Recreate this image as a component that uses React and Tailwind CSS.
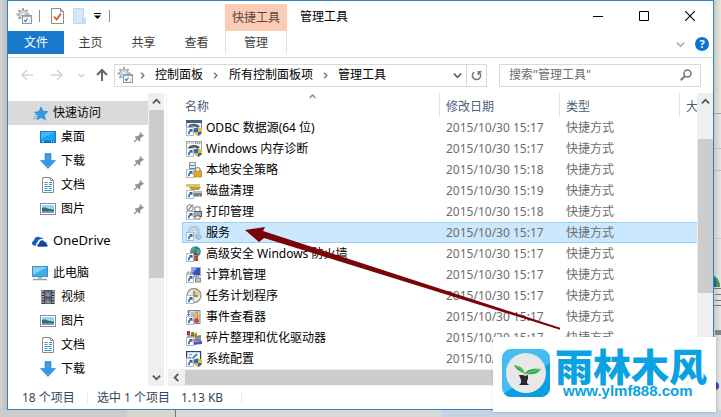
import React from "react";

/* ---------- small glyphs ---------- */

function Chevron({ dir = "down", className = "" }) {
  const paths = {
    down: "M1 3l4 4 4-4",
    up: "M1 7l4-4 4 4",
    left: "M7 1L3 5l4 4",
    right: "M3 1l4 4-4 4",
  };
  return (
    <svg viewBox="0 0 10 10" className={className} fill="none" stroke="currentColor" strokeWidth="2">
      <path d={paths[dir]} />
    </svg>
  );
}

function ToolsIcon() {
  return (
    <svg viewBox="0 0 16 16" className="size-4 shrink-0">
      <g stroke="#a3a8ab" strokeWidth="2">
        <path d="M7 0v13M.5 6.500h13M2.400 2l9.200 9M11.600 2l-9.200 9" />
      </g>
      <circle cx="7" cy="6.500" r="4.200" fill="#d5d9dc" stroke="#a3a8ab" />
      <circle cx="7" cy="6.500" r="1.800" fill="#fff" stroke="#b5b9bc" strokeWidth=".6" />
      <rect x="6.500" y="7.500" width="9" height="8" fill="#fff" stroke="#8b98a3" />
      <path d="M6.500 8.500h9" stroke="#9ab0c0" strokeWidth="1.400" />
      <path d="M8 12l1.400 1.500L11.500 10.500" fill="none" stroke="#2b7fc6" strokeWidth="1.200" />
      <path d="M12.500 12h2M12.500 13.800h2" stroke="#b9c4cc" strokeWidth=".8" />
    </svg>
  );
}

function CheckDoc() {
  return (
    <svg viewBox="0 0 13 16" className="h-4 w-[13px]">
      <path d="M.5.5h9l3 3v12H.5z" fill="#fff" stroke="#8b8b8b" />
      <path d="M9.500.5v3h3" fill="none" stroke="#8b8b8b" />
      <path d="M3 8.500l2.600 3L10 5.500" fill="none" stroke="#e0562b" strokeWidth="1.800" />
    </svg>
  );
}

function PaleFolder() {
  return (
    <svg viewBox="0 0 13 16" className="h-4 w-[13px]">
      <path d="M.5.5h10V10h2v5.500H.5z" fill="#d8e6f5" stroke="#c4d6ea" />
      <path d="M10 10v5" stroke="#b9cbdf" />
    </svg>
  );
}

function Arrow({ dir, className }) {
  const d = { left: "M13 7H2M7 2L2 7l5 5", right: "M1 7h11M7 2l5 5-5 5", up: "M7 13V2M2 7l5-5 5 5" };
  return (
    <svg viewBox="0 0 14 14" className={className} fill="none" stroke="currentColor" strokeWidth={dir === "up" ? 2 : 1.5}>
      <path d={d[dir]} />
    </svg>
  );
}

/* ---------- navigation icons ---------- */

const navIcons = {
  star: (
    <>
      <path d="M9 2l2.100 4.200 4.700.4-3.400 3.500 1 4.700-4.200-2.300L5 14.800l.8-4.600L2.700 7.300l4.400-.9z" fill="#2f9be3" stroke="#1b7fcb" strokeWidth=".6" />
      <path d="M2.500 9.500h3M1.800 11.500h3M1 13.500h3" stroke="#5fb4ee" strokeWidth=".9" />
    </>
  ),
  desktop: (
    <>
      <rect x=".5" y="2.500" width="15" height="11" fill="#1aa0f2" stroke="#1480cc" />
      <path d="M1 3h14L1 10z" fill="#45b6f8" />
      <path d="M1 12.500h14" stroke="#0c66ad" strokeWidth="1.400" />
      <path d="M2 12.500h2M11 12.500h1M13 12.500h1" stroke="#bfe4ff" />
    </>
  ),
  download: <path d="M5 .5h6v7h4.500L8 15.500.5 7.500H5z" fill="#3f97e0" stroke="#2a7dca" strokeWidth=".6" />,
  doc: (
    <>
      <path d="M2.500.5h8l3 3v12h-11z" fill="#fff" stroke="#8d8d8d" />
      <path d="M10.500.5v3h3" fill="none" stroke="#8d8d8d" />
      <path d="M4.500 5.500h3M9 5.500h3M4.500 7.500h3M9 7.500h3M4.500 9.500h7M4.500 11.500h3M9 11.500h3M4.500 13.500h7" stroke="#3f95c8" />
    </>
  ),
  picture: (
    <>
      <rect x=".5" y="2.500" width="15" height="11" fill="#fff" stroke="#8d8d8d" />
      <rect x="2" y="4" width="12" height="8" fill="#9fd2ef" />
      <path d="M2 7c4-1.500 5 1.500 12 1.500V12H2z" fill="#376a80" />
      <path d="M2 10.500c4-1 8 .5 12-.5v2H2z" fill="#6ba8c8" />
    </>
  ),
  onedrive: (
    <>
      <path d="M1.500 12.500C-.8 11-.2 8 2.200 7.500 2.200 4.300 6 2.600 8.300 4.800c1.200-.5 2.500 0 3.100 1C7 5.500 5.600 8 5.500 9.500 4 10 4 11.500 4.300 12.500z" fill="#1a5ab8" />
      <path d="M6.500 14c-2-.4-2-3.400.4-3.600 0-3.600 4.600-4.600 5.800-1.600 2-.2 2.500 1.600 2.100 2.400 1.600.4 1.500 2.600-.2 2.800z" fill="#1345a0" stroke="#fff" strokeWidth=".6" />
    </>
  ),
  pc: (
    <>
      <rect x=".5" y="1.500" width="15" height="10" fill="#3bb2ee" stroke="#4a89ad" />
      <path d="M1 2h14L1 10z" fill="#7fd0f7" />
      <path d="M6 12.500h4M1 14.500h14" stroke="#8fa2ae" strokeWidth="1.300" />
    </>
  ),
  video: (
    <>
      <rect x="1.500" y="1" width="13" height="14" fill="#2f2f2f" />
      <rect x="4.500" y="1.500" width="7" height="6" fill="#4b76b8" />
      <rect x="4.500" y="8.500" width="7" height="6" fill="#4869b8" />
      <path d="M4.500 7.500l3-4 4 4zM4.500 14.500l3-4 4 4z" fill="#b88a38" />
      <path d="M3 1.500v14M13 1.500v14" stroke="#e8e8e8" strokeWidth="1.400" strokeDasharray="1.500 1.200" />
    </>
  ),
};

function NavIcon({ name }) {
  return <svg viewBox="0 0 16 16" className="size-4 shrink-0">{navIcons[name]}</svg>;
}

function Pin() {
  return (
    <svg viewBox="0 0 12 12" className="ml-auto mr-[3px] size-3">
      <path d="M7 1l4 4-1 .6-.8-.2-2 2 .2 2.300-.9.8L1.800 6l.8-.9 2.300.2 2-2-.3-1.300z" fill="#8894a0" />
      <path d="M4.500 7.500L1 11" stroke="#8894a0" strokeWidth="1.200" />
    </svg>
  );
}

/* ---------- file icons ---------- */

const shield = (
  <>
    <path d="M12 7.500l4 1v3c0 2-2 3.500-4 4.500-2-1-4-2.500-4-4.500v-3z" fill="#e6bb45" />
    <path d="M12 7.500l-4 1V12h4zM12 12h4c-.3 2-2 3.200-4 4z" fill="#2f6cab" />
  </>
);

const fileArt = {
  odbc: (
    <>
      <rect x=".5" y=".5" width="15" height="12" fill="#eef3f8" stroke="#7890a8" />
      <path d="M0 1.500h16" stroke="#3f5f8c" strokeWidth="3" />
      <path d="M3 7c2-2.500 7-2.500 10 0" fill="none" stroke="#5a636b" strokeWidth="2.600" />
      {shield}
    </>
  ),
  memory: (
    <>
      <rect x=".5" y=".5" width="15" height="12" fill="#f8fafb" stroke="#9aa7b1" />
      <path d="M1 2h14" stroke="#d3dde5" strokeWidth="2" />
      <path d="M9 2h5" stroke="#51657a" strokeDasharray="1 1" />
      <path d="M3 7.500c2-3 7-3 10-.5" fill="none" stroke="#4a555e" strokeWidth="2.600" />
      {shield}
    </>
  ),
  policy: (
    <>
      <rect x="3.500" y=".5" width="6" height="11" fill="#e5ebf2" stroke="#8796ab" />
      <path d="M4 3.500h5M4 6.500h5" stroke="#5f7fa6" />
      <path d="M9.500 9V7.500c0-2.500 4.500-2.500 4.500 0V9" fill="none" stroke="#8d8d8d" strokeWidth="1.300" />
      <rect x="8" y="9" width="7.500" height="6" fill="#e9b52c" stroke="#a87a12" strokeWidth=".7" />
      <path d="M8 11h7M8 13h7" stroke="#c6921a" strokeWidth=".7" />
    </>
  ),
  disk: (
    <>
      <path d="M0 1h14v3H0z" fill="#dcc36d" />
      <path d="M3 4h12l-2 3H5z" fill="#b99c49" />
      <rect x="5" y="8.500" width="11" height="5" fill="#70767c" />
      <path d="M5 9.500h11" stroke="#b9bec2" strokeWidth="1.500" />
      <path d="M12 12.500h2" stroke="#44db59" />
    </>
  ),
  print: (
    <>
      <circle cx="4" cy="4" r="3.300" fill="#e5e8ea" stroke="#84898d" />
      <path d="M1.500 6.500l5-5M4 4l3-3.500" stroke="#6e7377" />
      <rect x="9" y="3" width="5" height="5" fill="#fff" stroke="#7a7f83" />
      <rect x="6.500" y="7.500" width="9" height="5" fill="#a3a8ac" stroke="#565b5f" />
      <path d="M9 12h5v3H9z" fill="#fff" stroke="#565b5f" strokeWidth=".8" />
    </>
  ),
  service: (
    <>
      <circle cx="8" cy="6.500" r="5.500" fill="none" stroke="#a9c4d6" strokeWidth="2" strokeDasharray="1.500 1.300" />
      <circle cx="8" cy="6.500" r="4.200" fill="#cfe4f2" stroke="#9ab8cc" />
      <circle cx="8" cy="6.500" r="1.800" fill="#e2f1fb" stroke="#9ab8cc" strokeWidth=".7" />
      <circle cx="12.500" cy="12" r="2.500" fill="#b5cad8" stroke="#7f9eb3" strokeDasharray="1 .6" />
    </>
  ),
  firewall: (
    <>
      <circle cx="9.500" cy="5.500" r="5.300" fill="#2977c9" />
      <path d="M6 2c3-2 5 0 3 2S5 7 5 4zM11 3c3 0 4 3 2 5s-3-3-2-5z" fill="#54b152" />
      <path d="M2 7h8l2 2v6H3z" fill="#9b3a2c" />
      <path d="M3 9.500h9M3 12h9M6 7v8M9 9v6" stroke="#d99c82" strokeWidth=".6" />
    </>
  ),
  computer: (
    <>
      <rect x="5.500" y=".5" width="9" height="8" fill="#3b50c6" stroke="#a3adba" />
      <path d="M6 1h5L6 7z" fill="#8fa0ef" />
      <path d="M1 5h4v4H1z" fill="#cbd1d7" stroke="#8a939b" strokeWidth=".7" />
      <path d="M8 9.500h5" stroke="#9fa8b2" strokeWidth="2" />
      <rect x="9.500" y="11" width="5" height="4" fill="#c0c6cb" stroke="#6f777e" strokeWidth=".8" />
    </>
  ),
  clock: (
    <>
      <circle cx="8" cy="7.500" r="7" fill="#f2ead5" stroke="#8f9395" strokeWidth="1.300" />
      <path d="M8 7.500V1.500a6 6 0 0 1 6 6z" fill="#e5cf8e" />
      <path d="M8 3v5h4" fill="none" stroke="#6b6f73" strokeWidth="1.300" />
    </>
  ),
  event: (
    <>
      <rect x="2.500" y="1.500" width="11.500" height="13" fill="#dfe4ea" stroke="#7d8690" />
      <path d="M1 3h3M1 5.500h3M1 8h3" stroke="#6d767f" />
      <path d="M5 4h3M5 6h3M11.500 2v12" stroke="#8595a8" />
      <path d="M10 2.500l3 5.500H7z" fill="#f0c234" stroke="#b88a12" strokeWidth=".6" />
      <circle cx="10.500" cy="11.500" r="2.500" fill="#cf4049" />
    </>
  ),
  defrag: (
    <>
      <path d="M1 1h3v4H1z" fill="#d62727" />
      <path d="M5 2h3v4H5z" fill="#39a84b" />
      <path d="M8 4l3-2v5H8z" fill="#e37828" />
      <path d="M9 6l6-1v3l-6 1z" fill="#3eab55" />
      <path d="M7 9l8-.5V11l-8 .5z" fill="#c748b0" />
      <path d="M7 12l9-1v3l-9 1z" fill="#4157c5" />
      <path d="M1 6h7" stroke="#7b2f2f" />
    </>
  ),
  config: (
    <>
      <rect x=".6" y=".6" width="14" height="12" fill="#edf4fb" stroke="#27476f" strokeWidth="1.200" />
      <path d="M3 6l2.500 2.500L11 3" fill="none" stroke="#2a68c0" strokeWidth="1.500" />
      <path d="M3 3.500h3" stroke="#7693b2" />
      {shield}
    </>
  ),
};

function FileIcon({ name }) {
  return (
    <svg viewBox="0 0 16 16" className="size-4 shrink-0">
      {fileArt[name]}
      <rect x=".5" y="7.500" width="7" height="8" fill="#fff" stroke="#b4bac0" />
      <path d="M3 9h3.500v3.500z" fill="#2b68a8" />
      <path d="M5.500 10.200C3.600 10.800 2.600 12.200 2.800 14.300" fill="none" stroke="#2b68a8" strokeWidth="1.500" />
    </svg>
  );
}

/* ---------- data ---------- */

const files = [
  ["odbc", "ODBC 数据源(64 位)", "15:17"],
  ["memory", "Windows 内存诊断", "15:17"],
  ["policy", "本地安全策略", "15:18"],
  ["disk", "磁盘清理", "15:19"],
  ["print", "打印管理", "15:18"],
  ["service", "服务", "15:17"],
  ["firewall", "高级安全 Windows 防火墙", "15:17"],
  ["computer", "计算机管理", "15:17"],
  ["clock", "任务计划程序", "15:17"],
  ["event", "事件查看器", "15:17"],
  ["defrag", "碎片整理和优化驱动器", "15:17"],
  ["config", "系统配置", "15:17"],
];

const quickItems = [
  ["desktop", "桌面"],
  ["download", "下载"],
  ["doc", "文档"],
  ["picture", "图片"],
];

const pcItems = [
  ["video", "视频"],
  ["picture", "图片"],
  ["doc", "文档"],
  ["download", "下载"],
];

/* ---------- sections ---------- */

function TitleBar() {
  return (
    <header className="flex h-[30px]">
      <div className="flex w-[217px] items-center pl-2">
        <ToolsIcon />
        <span className="ml-[7px] h-3 w-px bg-[#8a8a8a]" />
        <button aria-label="属性" className="ml-[11px]"><CheckDoc /></button>
        <button aria-label="新建文件夹" className="ml-[9px]"><PaleFolder /></button>
        <button aria-label="自定义快速访问工具栏" className="ml-2">
          <svg viewBox="0 0 7 6" className="h-[6px] w-[7px]"><path d="M0 .5h7" stroke="#000" /><path d="M0 2.500h7L3.500 6z" /></svg>
        </button>
        <span className="ml-2 h-3 w-px bg-[#8a8a8a]" />
      </div>
      <div className="mt-[3px] flex w-[62px] items-center justify-center bg-[#fbcbb4] text-[#5d463c]">快捷工具</div>
      <h1 className="ml-[13px] leading-8">管理工具</h1>
      <div className="ml-auto flex">
        <button aria-label="最小化" className="flex w-[46px] items-center justify-center">
          <svg viewBox="0 0 10 10" className="size-[10px]"><path d="M0 5.500h10" stroke="#000" /></svg>
        </button>
        <button aria-label="最大化" className="flex w-[46px] items-center justify-center">
          <svg viewBox="0 0 10 10" className="size-[10px]"><path d="M.5.5h9v9h-9z" fill="none" stroke="#000" /></svg>
        </button>
        <button aria-label="关闭" className="flex w-[46px] items-center justify-center">
          <svg viewBox="0 0 10 10" className="size-[10px]"><path d="M0 0l10 10M10 0L0 10" stroke="#000" strokeWidth="1.100" /></svg>
        </button>
      </div>
    </header>
  );
}

function Ribbon() {
  return (
    <div className="flex h-[27px] border-b border-[#dadbdc] text-[#3c3c3c]">
      <button className="h-[23px] w-14 bg-[#1979ca] text-white">文件</button>
      <button className="h-[23px] w-[53px]">主页</button>
      <button className="h-[23px] w-[53px]">共享</button>
      <button className="h-[23px] w-[53px]">查看</button>
      <button className="ml-[2px] h-[23px] w-[62px] border-x border-[#e3e3e3]">管理</button>
      <button aria-label="展开功能区" className="ml-auto flex items-center text-[#b0b0b0]">
        <Chevron className="size-[9px]" />
      </button>
      <button aria-label="帮助" className="ml-[10px] mr-1 mt-[6px] flex size-[14px] items-center justify-center rounded-full bg-[#0a73cf] text-[11px] font-bold text-white">?</button>
    </div>
  );
}

function AddressBar() {
  return (
    <div className="flex h-[35px] items-center pb-px">
      <div className="flex w-[106px] items-center pl-3">
        <button aria-label="后退"><Arrow dir="left" className="size-[14px] text-[#d2d2d2]" /></button>
        <button aria-label="前进" className="ml-4"><Arrow dir="right" className="size-[14px] text-[#d2d2d2]" /></button>
        <button aria-label="最近" className="ml-[14px]"><Chevron className="size-[7px] text-[#d2d2d2]" /></button>
        <button aria-label="上移" className="ml-[10px]"><Arrow dir="up" className="size-[14px] text-[#666]" /></button>
      </div>
      <div className="flex h-[23px] min-w-0 flex-1 items-center border border-[#d9d9d9] pl-[2px]">
        <ToolsIcon />
        <Chevron dir="right" className="ml-[6px] size-[7px] text-[#777]" />
        <button className="ml-[9px]">控制面板</button>
        <Chevron dir="right" className="ml-[9px] size-[7px] text-[#777]" />
        <button className="ml-[10px]">所有控制面板项</button>
        <Chevron dir="right" className="ml-[9px] size-[7px] text-[#777]" />
        <button className="ml-[9px]">管理工具</button>
        <button aria-label="历史记录" className="ml-auto mr-1"><Chevron className="size-[9px] text-[#666]" /></button>
        <button aria-label="刷新" className="flex h-full w-5 items-center justify-center border-l border-[#d9d9d9]">
          <svg viewBox="0 0 12 12" className="size-[11px]" fill="none" stroke="#777" strokeWidth="1.600">
            <path d="M8.500 2.200a4.500 4.500 0 1 1-5 0M8 5.500V1.800h3.500" />
          </svg>
        </button>
      </div>
      <label className="ml-3 mr-3 flex h-[23px] w-[202px] items-center border border-[#d9d9d9] pl-[9px] pr-2">
        <input type="text" aria-label="搜索" placeholder={'搜索"管理工具"'} className="min-w-0 flex-1 bg-transparent outline-none placeholder:text-[#6d6d6d]" />
        <svg viewBox="0 0 12 12" className="size-3" fill="none" stroke="#777">
          <circle cx="7.500" cy="4.500" r="3.500" strokeWidth="1.500" />
          <path d="M5 7L.8 11.200" strokeWidth="2" />
        </svg>
      </label>
    </div>
  );
}

function NavRow({ icon, label, nested, pin, active }) {
  return (
    <li>
      <a href="#" className={`flex h-6 items-center gap-[5px] ${nested ? "pl-8" : "pl-6"} ${active ? "bg-[#d9d9d9]" : ""}`}>
        <NavIcon name={icon} />
        {label}
        {pin && <Pin />}
      </a>
    </li>
  );
}

function NavPane() {
  return (
    <nav className="w-[140px] pt-2">
      <ul>
        <NavRow icon="star" label="快速访问" active />
        {quickItems.map(([i, l]) => <NavRow key={l} icon={i} label={l} nested pin />)}
      </ul>
      <ul className="mt-2 text-[13px]"><NavRow icon="onedrive" label="OneDrive" /></ul>
      <ul className="mt-2">
        <NavRow icon="pc" label="此电脑" />
        {pcItems.map(([i, l]) => <NavRow key={l} icon={i} label={l} nested />)}
      </ul>
    </nav>
  );
}

function VScroll({ thumb, down }) {
  return (
    <div className="flex w-4 shrink-0 flex-col items-center bg-[#efefef] text-[#555]">
      <div className="flex h-[17px] items-center"><Chevron dir="up" className="size-[9px]" /></div>
      <div className={`${thumb} w-[15px] bg-[#cdcdcd]`} />
      {down && <div className="mt-auto flex h-[17px] items-center"><Chevron className="size-[9px]" /></div>}
    </div>
  );
}

function FileTable() {
  return (
    <table className="w-full table-fixed border-separate border-spacing-0 whitespace-nowrap">
      <colgroup>
        <col />
        <col className="w-[120px]" />
        <col className="w-[120px]" />
        <col className="w-[17px]" />
      </colgroup>
      <thead>
        <tr className="h-6 text-left text-[#4c607a]">
          <th className="overflow-hidden border-r border-[#e5e5e5] p-0 pl-[3px] font-normal">
            <div className="flex h-6 flex-col">
              <Chevron dir="up" className="mx-auto -mb-[3px] size-[7px] shrink-0 text-[#888]" />
              <span className="leading-5">名称</span>
            </div>
          </th>
          <th className="border-r border-[#e5e5e5] p-0 pl-[6px] pt-1 font-normal leading-5">修改日期</th>
          <th className="border-r border-[#e5e5e5] p-0 pl-[6px] pt-1 font-normal leading-5">类型</th>
          <th className="overflow-hidden p-0 pl-[6px] pt-1 font-normal leading-5">大</th>
        </tr>
      </thead>
      <tbody>
        {files.map(([icon, name, time]) => {
          const sel = icon === "service";
          const edge = sel ? "border-y border-[#99d1f5] bg-[#cce8ff]" : "border-y border-transparent";
          return (
            <tr key={name} className="h-[21px] leading-[19px]">
              <td className={`${edge} p-0 ${sel ? "border-l pl-[3px]" : "pl-1"}`}>
                <span className="flex h-[19px] items-center gap-1"><FileIcon name={icon} />{name}</span>
              </td>
              <td className={`${edge} p-0 pl-[6px] text-[#6d6d6d]`}>2015/10/30 {time}</td>
              <td className={`${edge} p-0 pl-[6px] text-[#6d6d6d]`}>快捷方式</td>
              <td className={`${edge} p-0`} />
            </tr>
          );
        })}
      </tbody>
    </table>
  );
}

function StatusBar() {
  return (
    <footer className="flex h-[23px] items-center pl-[14px] text-[#33475c]">
      <span className="w-[65px]">18 个项目</span>
      <span className="h-3 w-px bg-[#ececec]" />
      <span className="ml-[9px] w-[84px]">选中 1 个项目</span>
      <span className="w-[60px]">1.13 KB</span>
      <span className="h-3 w-px bg-[#ececec]" />
    </footer>
  );
}

function Watermark() {
  return (
    <div className="absolute bottom-[5px] right-[5px] flex h-[75px] w-[223px] bg-white pl-[9px] pt-3 font-bold text-[#0aa2e3] shadow-sm">
      <svg viewBox="0 0 48 48" className="size-12 shrink-0">
        <rect width="48" height="48" rx="9" fill="#45bdf0" />
        <path d="M48 14v25a9 9 0 0 1-9 9H9a9 9 0 0 1-7-3.500z" fill="#0a9fe2" />
        <circle cx="24" cy="24" r="20" fill="#e8e8e8" />
        <path d="M23 25c-1-5-4-8-11-9 2 5 6 6 11 9z" fill="#35a94a" />
        <path d="M22 26c2-5 7-7 17-6-3 5-9 6-15 5z" fill="#35a94a" />
        <path d="M12 16c4 2 8 4 11 9M22 26c5-3 10-4 17-6" fill="none" stroke="#8bd68d" strokeWidth=".8" />
        <path d="M17 26h4l2 1 3-1 0 4-1 2v2l2 2H17l2-2v-3z" fill="#262a2d" />
      </svg>
      <div className="ml-[5px] flex-1">
        <div className="h-[34px] whitespace-nowrap text-[38px] font-black leading-[34px]">雨林木风</div>
        <div className="pl-2 font-['Liberation_Sans',sans-serif] text-[15px] leading-4">www.ylmf888.com</div>
      </div>
    </div>
  );
}

function Backdrop() {
  return (
    <div className="w-[7px] shrink-0 overflow-hidden bg-gradient-to-r from-[#c9c9c9] to-[#e6e6e8]">
      <div className="h-[114px] border-b border-[#a8a8a8] bg-gradient-to-r from-[#c9c8c2] to-[#eae8dc]" />
      <div className="h-[35px] border-b border-[#bdbdbd]" />
      <div className="h-[22px] border-b border-[#bdbdbd]" />
      <div className="h-[68px] border-b border-[#c6c6c6]" />
      <div className="h-[37px]" />
      <svg viewBox="0 0 7 60" className="h-[60px] w-[7px]">
        <path d="M0 0c4 2 6 6 6 11H0z" fill="#4b9440" />
        <path d="M0 0c2 3 3 7 2 11H0z" fill="#1b5fa3" />
        <path d="M0 12.500h7M1 18.500h6M1 24.500h6M0 29.500h7" stroke="#777" />
        <path d="M1 54h6v5H1z" fill="#7c858c" />
      </svg>
      <div className="pt-[46px]"><div className="h-2 w-[5px] rounded-r bg-[#3a45b5]" /></div>
    </div>
  );
}

export default function App() {
  return (
    <div className="relative overflow-hidden bg-[#d9d9d9] font-['Noto_Sans','Noto_Sans_CJK_SC',sans-serif] text-xs text-black">
      <div className="flex">
        <div className="w-[7px] shrink-0 bg-gradient-to-r from-[#d3d3d3] to-[#bdbdbd]" />
        <div className="relative min-w-0 flex-1 border border-[#2f83bd] bg-white">
          <TitleBar />
          <Ribbon />
          <AddressBar />
          <main className="flex">
            <NavPane />
            <VScroll thumb="h-[168px]" down />
            <div className="ml-[2px] w-px bg-[#f3f3f3]" />
            <section className="ml-px min-w-0 flex-1">
              <div className="flex">
                <div className="min-w-0 flex-1 pl-[14px]"><FileTable /></div>
                <VScroll thumb="mt-[29px] h-[154px]" />
              </div>
              <div className="flex h-[17px] bg-[#efefef] py-px text-[#555]">
                <div className="flex w-[17px] items-center justify-center"><Chevron dir="left" className="size-[9px]" /></div>
                <div className="mr-40 flex-1 bg-[#cdcdcd]" />
              </div>
            </section>
          </main>
          <StatusBar />
          <svg viewBox="0 0 320 120" className="pointer-events-none absolute left-[232px] top-[219px] h-[120px] w-80">
            <path d="M5 10L25 7 23 11 321 108v2L24 18 19 22z" fill="#7a0508" />
          </svg>
        </div>
        <Backdrop />
      </div>
      <div className="flex h-[7px]">
        <div className="w-[127px] bg-[#cccccc]" />
        <div className="w-12 bg-[#d6d8d0]" />
        <div className="w-px bg-[#777]" />
        <div className="w-[266px] bg-[#d8d8d8]" />
        <div className="flex-1 bg-[#c6d3e0]" />
      </div>
      <Watermark />
    </div>
  );
}
